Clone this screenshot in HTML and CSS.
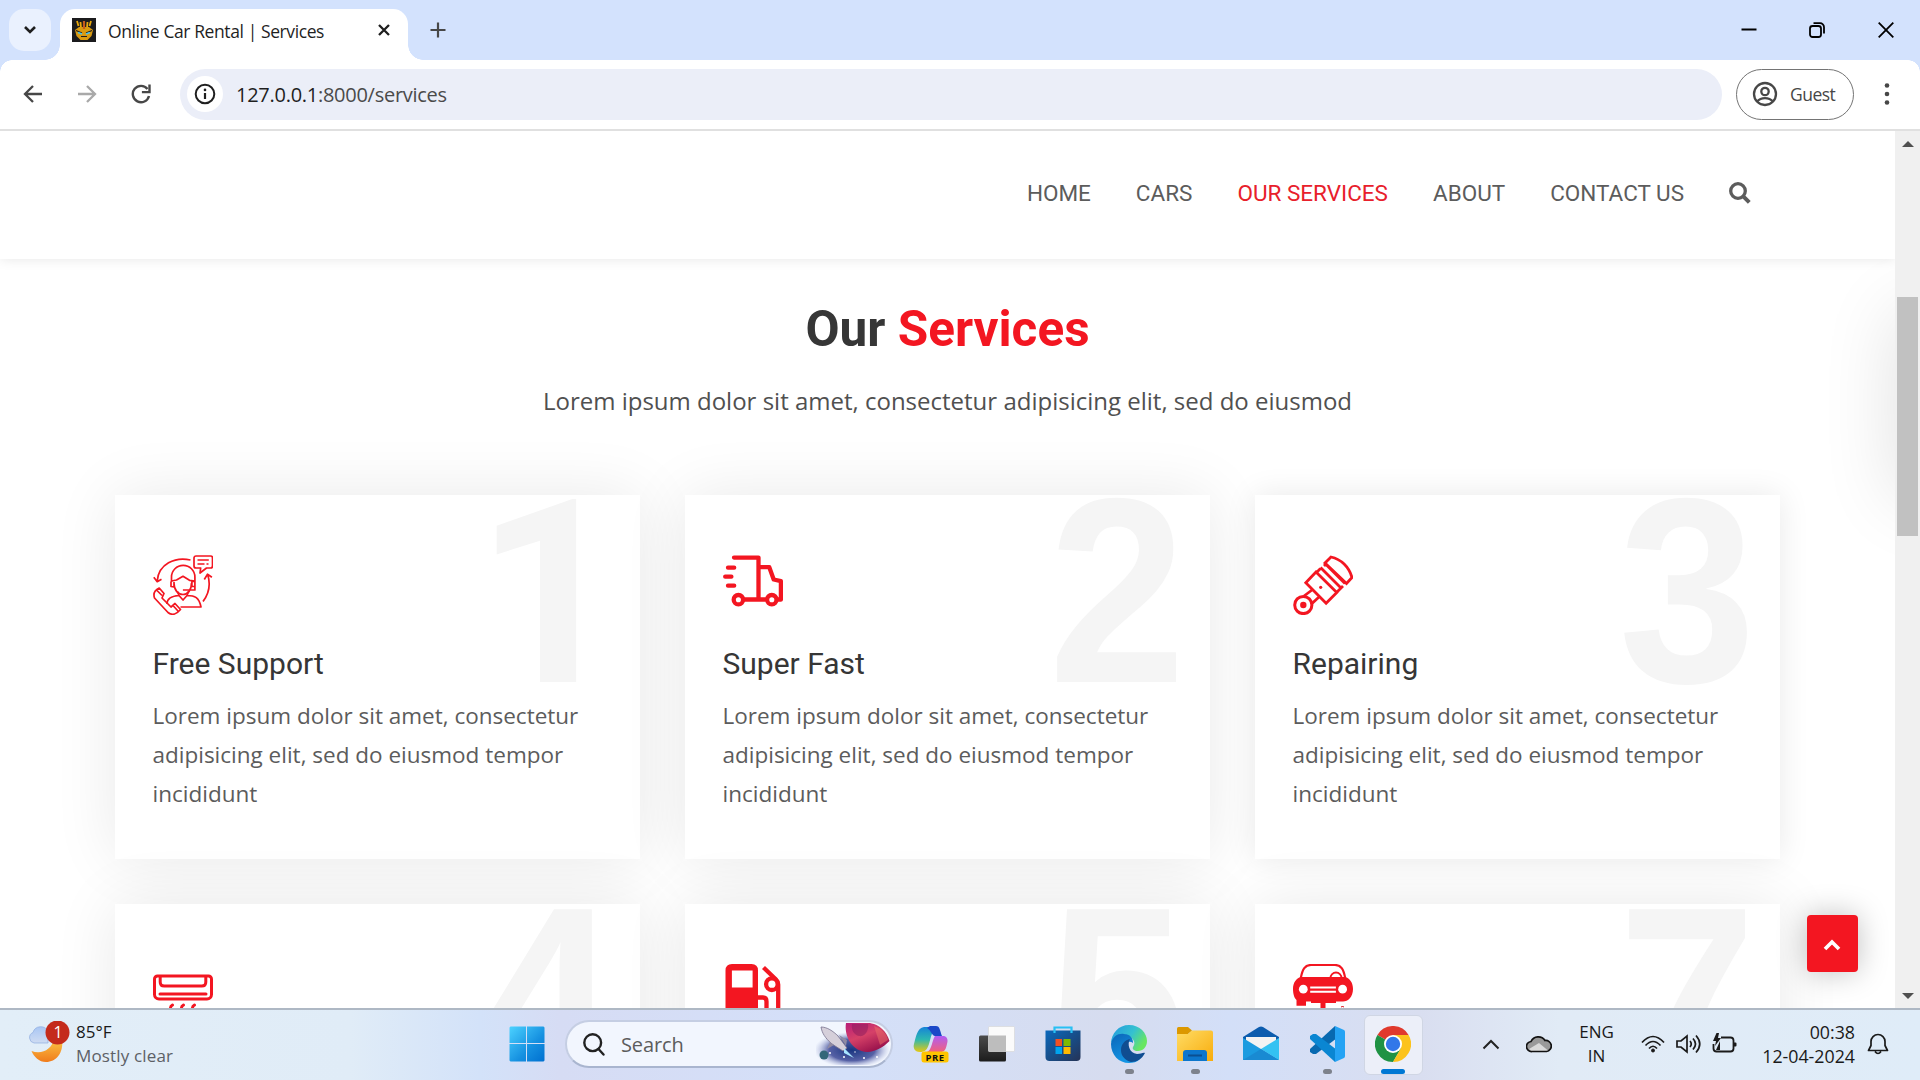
FILE: index.html
```html
<!DOCTYPE html>
<html lang="en">
<head>
<meta charset="utf-8">
<title>Online Car Rental | Services</title>
<link rel="stylesheet" href="styles.css">
</head>
<body>
<div class="window">
  <header class="tabstrip">
    <button class="tab-search"><svg width="14" height="10" viewBox="0 0 14 10"><path d="M2 2l5 5 5-5" fill="none" stroke="#1f1f1f" stroke-width="2.6"/></svg></button>
    <div class="tab">
      <svg class="favicon" width="24" height="24" viewBox="0 0 24 24"><rect width="24" height="24" fill="#1b1b1d"/><path d="M5 3l1.500 5M19 3l-1.500 5M8.500 4l.5 6M15.500 4l-.5 6" stroke="#e9a90c" stroke-width="1.800"/><path d="M3 12l4-3h10l4 3-1.500 6-4 4h-7l-4-4z" fill="#d99a10"/><path d="M12 3v8" stroke="#c65a1c" stroke-width="2.200"/><path d="M4 12.500l6 2.500M20 12.500L14 15M9 18.500h6" stroke="#1b1b1d" stroke-width="1.200"/><path d="M6 14.500l4 1.500M18 14.500l-4 1.500" stroke="#49c1e8" stroke-width="1.600"/></svg>
      <span class="tab-title">Online Car Rental | Services</span>
      <svg class="tab-close" width="14" height="14" viewBox="0 0 14 14"><path d="M2 2l10 10M12 2L2 12" stroke="#1f1f1f" stroke-width="2.3"/></svg>
    </div>
    <svg class="new-tab" width="16" height="16" viewBox="0 0 16 16"><path d="M8 .5v15M.5 8h15" stroke="#474747" stroke-width="2.2"/></svg>
    <div class="window-controls">
      <svg width="16" height="16" viewBox="0 0 16 16"><path d="M.5 7.500h15" stroke="#000" stroke-width="2"/></svg>
      <svg width="16" height="16" viewBox="0 0 16 16"><rect x="1" y="4" width="11" height="11" rx="2.5" fill="none" stroke="#000" stroke-width="1.8"/><path d="M4.500 1.200h6.500a4 4 0 0 1 4 4v6.300" fill="none" stroke="#000" stroke-width="1.8"/></svg>
      <svg width="16" height="16" viewBox="0 0 16 16"><path d="M.7.700l14.600 14.600M15.300.700L.7 15.300" stroke="#000" stroke-width="1.8"/></svg>
    </div>
  </header>
  <div class="toolbar">
    <svg width="20" height="20" viewBox="0 0 20 20"><path d="M19 10H2.500M10 2l-8 8 8 8" fill="none" stroke="#474747" stroke-width="2.300"/></svg>
    <svg width="20" height="20" viewBox="0 0 20 20"><path d="M1 10h16.500M10 2l8 8-8 8" fill="none" stroke="#a9a9a9" stroke-width="2.300"/></svg>
    <svg width="20" height="20" viewBox="0 0 20 20"><path d="M16.500 5A8.200 8.200 0 1 0 18 12" fill="none" stroke="#474747" stroke-width="2.400"/><path d="M18.500.5v7.600h-7.600" fill="none" stroke="#474747" stroke-width="2.400"/></svg>
    <div class="omnibox">
      <span class="site-info"><svg width="22" height="22" viewBox="0 0 22 22"><circle cx="11" cy="11" r="9.300" fill="none" stroke="#1f1f1f" stroke-width="2"/><path d="M11 10v6" stroke="#1f1f1f" stroke-width="2.200"/><circle cx="11" cy="6.900" r="1.300" fill="#1f1f1f"/></svg></span>
      <span class="url">127.0.0.1<span class="url-rest">:8000/services</span></span>
    </div>
    <div class="profile">
      <svg width="26" height="26" viewBox="0 0 26 26" fill="none" stroke="#474747" stroke-width="2.300"><circle cx="13" cy="13" r="11"/><circle cx="13" cy="10.500" r="3.700"/><path d="M5 20.500c4-4.600 12-4.600 16 0"/></svg>
      <span class="guest">Guest</span>
    </div>
    <svg class="menu" width="6" height="24" viewBox="0 0 6 24"><g fill="#474747"><circle cx="3" cy="3.500" r="2.300"/><circle cx="3" cy="12" r="2.300"/><circle cx="3" cy="20.500" r="2.300"/></g></svg>
  </div>

  <div class="viewport">
    <main class="page">
      <nav class="site-nav">
        <a>HOME</a><a>CARS</a><a class="active">OUR SERVICES</a><a>ABOUT</a><a>CONTACT US</a>
        <svg width="22" height="22" viewBox="0 0 22 22" fill="none" stroke="#5c5c5c"><circle cx="9" cy="9" r="7.300" stroke-width="3.300"/><path d="M14.300 14.300l6 6" stroke-width="4"/></svg>
      </nav>
      <section class="services">
        <h1>Our <em>Services</em></h1>
        <p class="lead">Lorem ipsum dolor sit amet, consectetur adipisicing elit, sed do eiusmod</p>
        <div class="cards">
          <article class="card">
            <span class="num one">1</span>
            <svg class="icon" viewBox="0 0 60 60" fill="none" stroke="#f31621" stroke-width="1.700" stroke-linejoin="round">
              <path d="M37.500 5C22 1.500 5.500 9 4.200 26M.8 22.200l3.400 4.500 4.300-2.500M50 46.500c6-8 7.500-18 4.700-27M51.300 24.500l3.200-5.300 4.400 3"/>
              <path d="M43 1h14.500a2 2 0 0 1 2 2v8a2 2 0 0 1-2 2h-4L47 18l.7-5H43a2 2 0 0 1-2-2V3a2 2 0 0 1 2-2zM44.500 5h11.300M44.500 9h7M53.500 9h2"/>
              <path d="M18.500 27v-5a11.700 11.700 0 0 1 23.400 0v13h-12M18.500 26l5-1 6.500-3.700 6.500 4 5.400.7M18 26.500v5l3 .5v-5M41.900 26.500h-3v5h3M21 28c0 7 4 11.500 9 11.500s8.500-4.500 8.500-11.500"/>
              <path d="M14 49c0-6 5-8 12-8.500l4 4.500 4-4.500c8 0 12 2 14 11.500H27.500M24.500 36.500l1.500 4M35.500 36.500L34 40.500"/>
              <path d="M6.200 33C2 35 0 38.500 1.500 43L15 57.500c4 3 8 2.500 12.500-3l-5.500-6-4 3.500-9-9 2-4.500zM4 35.500l5 5M19.500 50l5.500 6"/>
            </svg>
            <h2>Free Support</h2>
            <p>Lorem ipsum dolor sit amet, consectetur<br>adipisicing elit, sed do eiusmod tempor<br>incididunt</p>
          </article>
          <article class="card">
            <span class="num">2</span>
            <svg class="icon" viewBox="0 0 60 60" fill="none" stroke="#f31621" stroke-width="4.300" stroke-linecap="round" stroke-linejoin="round">
              <path d="M11 2.600h24.500v41.500M5 12.700h6.200M2.200 21.700h6.200M5 30.700h6.200M36 12.200h10.300l4.400 12.300 7.200 1.700v18.300h-3M22 44.500h20"/><circle cx="15.400" cy="44.700" r="4.700"/><circle cx="48.800" cy="44.700" r="4.700"/>
            </svg>
            <h2>Super Fast</h2>
            <p>Lorem ipsum dolor sit amet, consectetur<br>adipisicing elit, sed do eiusmod tempor<br>incididunt</p>
          </article>
          <article class="card tight">
            <span class="num">3</span>
            <svg class="icon" viewBox="0 0 60 60" fill="none" stroke="#f31621" stroke-width="2.800">
              <path d="M11 41l8-6M19 48.500l7.500-7M23 17L12.800 27.700l20.300 20.600L43.800 37.500zM23.500 17.500l4-4M27.500 12.500l21 21M33.200 8.800L31 11M33.500 10L52 28.500M38 2l-6 6 21.500 20.500 5.500-6C56 12 48 4 38 2zM44 37l6-6"/><circle cx="10.300" cy="50" r="8.600" stroke-width="3"/><circle cx="10.300" cy="50" r="3.200" fill="#f31621" stroke="none"/><circle cx="27.700" cy="32.300" r="1.600" fill="#f31621" stroke="none"/>
            </svg>
            <h2>Repairing</h2>
            <p>Lorem ipsum dolor sit amet, consectetur<br>adipisicing elit, sed do eiusmod tempor<br>incididunt</p>
          </article>
          <article class="card">
            <span class="num">4</span>
            <svg class="icon" viewBox="0 0 60 60" fill="none" stroke="#f31621" stroke-width="3" stroke-linecap="round"><path d="M4.500 12h51a3 3 0 0 1 3 3v15.500a4.500 4.500 0 0 1-4.500 4.500H6a4.500 4.500 0 0 1-4.500-4.500V15a3 3 0 0 1 3-3zM7.200 12.500V18q0 4 4 4h37.600q4 0 4-4v-5.500M7 30h46M19.500 41q-4 2.500 0 6M30.500 41q-4 2.500 0 6M41.500 41q-4 2.500 0 6"/></svg>
          </article>
          <article class="card">
            <span class="num">5</span>
            <svg class="icon" viewBox="0 0 60 60" fill="none" stroke="#f31621" stroke-width="4.300"><path d="M2.500 60V6.500q0-6.500 6.500-6.500h19.500q6.500 0 6.500 6.500V60zM8.900 6.500v17h20.700v-17z" fill="#f31621" fill-rule="evenodd" stroke="none"/><path d="M40.500 3.500L53 15.500q2.200 2 2.200 5V54M35 33.500h5q3.500 0 3.500 4V54"/><circle cx="48.900" cy="20.200" r="5.800"/></svg>
          </article>
          <article class="card">
            <span class="num">7</span>
            <svg class="icon" viewBox="0 0 60 60"><path d="M7.800 14C9.500 5 12 1 18 1h24c6 0 8.500 4 10.200 13" fill="none" stroke="#f31621" stroke-width="2.200"/><path d="M37.500 14a5.500 5.500 0 0 1 11 0" fill="none" stroke="#f31621" stroke-width="1.800"/><path d="M8 13h44c5 1 8 6 8 12 0 8-5 12.500-10 12.500h-7V39H32.500v21h-5V39H18v-1.500h-5v4.200H3.500V36C1 34 0 29 0 25c0-6 3-11 8-12z" fill="#f31621"/><circle cx="10.300" cy="25.200" r="4.400" fill="#fff"/><circle cx="49.600" cy="25.200" r="4.400" fill="#fff"/><path d="M17.200 23.500h25.700M17.200 27.700h25.700" stroke="#fff" stroke-width="1.900"/><path d="M48 43q1.500-1 3 0" stroke="#f31621"/></svg>
          </article>
        </div>
      </section>
      <aside class="settings-panel"></aside>
      <a class="to-top"><svg width="18" height="12" viewBox="0 0 18 12"><path d="M2 10l7-7 7 7" fill="none" stroke="#fff" stroke-width="3.700"/></svg></a>
    </main>
    <div class="scrollbar">
      <svg width="12" height="6" viewBox="0 0 12 6"><path d="M6 0l6 6H0z" fill="#505050"/></svg>
      <div class="thumb"></div>
      <svg class="down" width="12" height="6" viewBox="0 0 12 6"><path d="M6 6l6-6H0z" fill="#505050"/></svg>
    </div>
  </div>
</div>

<footer class="taskbar">
  <div class="weather">
    <svg width="42" height="42" viewBox="0 0 42 42"><defs><linearGradient id="moon" x2="0" y2="1"><stop offset="0" stop-color="#fbc546"/><stop offset="1" stop-color="#f07c1c"/></linearGradient><linearGradient id="cl" x2="0" y2="1"><stop offset="0" stop-color="#a9c6f4"/><stop offset="1" stop-color="#cfdcf2"/></linearGradient></defs><path d="M34 18C36 32 28 41 18 41 11 41 6 36 3.500 30 14 34 24 28 26 18z" fill="url(#moon)"/><path d="M6 22a5.500 5.500 0 0 1-1-10.500 8 8 0 0 1 15-1v11.500z" fill="url(#cl)" stroke="#8eacdf" stroke-width=".7"/><circle cx="29.500" cy="11.500" r="12" fill="#c42b1c"/><text x="30" y="17" text-anchor="middle" class="badge">1</text></svg>
    <div class="weather-text"><span class="temp">85°F</span><span class="cond">Mostly clear</span></div>
  </div>
  <div class="apps">
    <div class="app"><svg width="36" height="36" viewBox="0 0 36 36"><defs><linearGradient id="win" x2="1" y2="1"><stop offset="0" stop-color="#4cd2ff"/><stop offset=".6" stop-color="#1590e0"/><stop offset="1" stop-color="#0070d0"/></linearGradient></defs><path d="M1.500.5h15.500V17H.5V1.500zM18 .5h16.500l1 1V17H18zM.5 18H17v17.500H1.500l-1-1zM18 18h17.500v16.500l-1 1H18z" fill="url(#win)"/></svg></div>
    <div class="search">
      <svg width="22" height="23" viewBox="0 0 22 23" fill="none" stroke="#222" stroke-width="2.400" stroke-linecap="round"><circle cx="9.700" cy="9.700" r="8.400"/><path d="M15.500 16l5 5.500"/></svg>
      <span class="search-label">Search</span>
      <svg class="art" width="75" height="42" viewBox="0 0 75 42"><defs><radialGradient id="sky"><stop offset="0" stop-color="#17347f"/><stop offset=".6" stop-color="#44509b" stop-opacity=".9"/><stop offset="1" stop-color="#a9b3dc" stop-opacity="0"/></radialGradient><linearGradient id="planet" x2=".6" y2="1"><stop offset="0" stop-color="#b71d78"/><stop offset=".5" stop-color="#d64168"/><stop offset="1" stop-color="#99124c"/></linearGradient></defs><ellipse cx="36" cy="27" rx="38" ry="18" fill="url(#sky)"/><path d="M30 0h24c9 1 17 9 19.500 18-8 8-18 13-28 10C35 25 28 12 30 0z" fill="url(#planet)"/><path d="M36 1h16c1 8-4 13-9 12s-8-6-7-12z" fill="#8a1c5c" opacity=".5"/><path d="M58 3c8 3 13 8 14 14l-8 5z" fill="#ee7069" opacity=".5"/><path d="M5 4c6 0 12 4 17 9l9 12-4 3-11-7C9 15 6 10 5 4z" fill="#d5cfda" stroke="#77718d" stroke-width=".8"/><path d="M14 19l-3 7 7-4M23 12l8 5-1 6" fill="#8f8aa3"/><path d="M28 25l10 10-10-5z" fill="#a9e6ff"/><circle cx="8" cy="32" r="4.500" fill="#346779"/><g fill="#fff"><circle cx="28" cy="34" r="1"/><circle cx="14" cy="30" r="1"/><circle cx="48" cy="35" r="1"/><circle cx="61" cy="34" r="1"/><circle cx="39" cy="29" r=".7"/></g></svg>
    </div>
    <div class="app"><svg width="36" height="38" viewBox="0 0 36 38"><defs><linearGradient id="c1" x2="0" y2="1"><stop offset="0" stop-color="#1683d8"/><stop offset=".5" stop-color="#2db8b0"/><stop offset="1" stop-color="#e8c80f"/></linearGradient><linearGradient id="c2" x2="0" y2="1"><stop offset="0" stop-color="#b05cf4"/><stop offset="1" stop-color="#f2617a"/></linearGradient></defs><path d="M11 2h12c-4 4-5 10-7 17-2 6-4 8-9 8C1 27 0 22 1 19 3 12 4 3 11 2z" fill="url(#c1)"/><path d="M17 1h6c4 0 4 5 6 10h-7c-3 0-4-6-8-8z" fill="#1b48c8"/><path d="M22 11h9c4 1 4 5 3 8-2 8-3 8-9 8H14c5-2 5-12 8-16z" fill="url(#c2)"/><rect x="8.500" y="26.500" width="27" height="11" rx="2.500" fill="#ffc400"/><text x="22" y="35.600" text-anchor="middle" class="pre">PRE</text></svg></div>
    <div class="app"><svg width="36" height="36" viewBox="0 0 36 36"><defs><linearGradient id="tv" x2="0" y2="1"><stop offset="0" stop-color="#4b4b4b"/><stop offset="1" stop-color="#1c1c1c"/></linearGradient></defs><rect y="9.500" width="27" height="26" rx="1.500" fill="url(#tv)"/><rect x="9.500" y=".5" width="26" height="25" rx="1" fill="#fbfbfb" stroke="#d8d8d8" stroke-width=".7"/><path d="M9.500 9.500H27v16H9.500z" fill="#bdbdbd"/></svg></div>
    <div class="app"><svg width="36" height="36" viewBox="0 0 36 36"><defs><linearGradient id="st" x2="1" y2="1"><stop offset="0" stop-color="#0a69bd"/><stop offset="1" stop-color="#253356"/></linearGradient></defs><path d="M.5 4.500h35V31q0 4-4 4h-27q-4 0-4-4z" fill="url(#st)"/><path d="M9.500 7V1.500h17V7" fill="none" stroke="#27c0f4" stroke-width="2.200"/><path d="M10.500 13H17v7h-6.500z" fill="#f25022"/><path d="M18.500 13h7v7h-7z" fill="#7fba00"/><path d="M10.500 21H17v7h-6.500z" fill="#00a4ef"/><path d="M18.500 21h7v7h-7z" fill="#ffb900"/></svg></div>
    <div class="app open"><svg width="36" height="38" viewBox="0 0 36 38"><defs><linearGradient id="e1" x2="1" y2=".5"><stop offset="0" stop-color="#2298e0"/><stop offset=".6" stop-color="#35c1d0"/><stop offset="1" stop-color="#68e661"/></linearGradient><linearGradient id="e2" x2=".5" y2="1"><stop offset="0" stop-color="#0b65b8"/><stop offset="1" stop-color="#1497e6"/></linearGradient></defs><path d="M0 19C0 8 8 0 18 0c11 0 18 8 18 16 0 6-4 10-9 10-4 0-6-2-5-4 3-4 1-8-4-11C11 7 2 11 0 19z" fill="url(#e1)"/><path d="M0 19C1 11 8 8 13 9c6 0 9 4 9 9-4-3-8 0-8 5 0 7 7 12 15 11-3 3-7 4-11 4C8 38 0 30 0 19z" fill="url(#e2)"/><path d="M10 25c0-6 4-10 9-11-3 5-1 14 7 15 4 0 6-2 8-1-3 6-8 9-14 9-6-2-10-6-10-12z" fill="#104d91"/></svg></div>
    <div class="app open"><svg width="36" height="36" viewBox="0 0 36 36"><defs><linearGradient id="fo" x2="1" y2="1"><stop offset="0" stop-color="#ffdc65"/><stop offset="1" stop-color="#f8ac0c"/></linearGradient></defs><path d="M0 8V2.500Q0 1 1.500 1H11l4 3.500L11 8z" fill="#dc9800"/><path d="M0 8h11l4-3.500h19q2 0 2 2V35H0z" fill="url(#fo)"/><path d="M6 35V27q0-3 3-3h18q3 0 3 3v8z" fill="#0c76cc"/><path d="M11 29.500h14" stroke="#0b4f91" stroke-width="2"/></svg></div>
    <div class="app"><svg width="36" height="36" viewBox="0 0 36 36"><path d="M0 11L16 1q2-1 4 0l16 10v5H0z" fill="#0c5cae"/><path d="M3 11h30v8L18 27 3 20z" fill="#f3f3f3"/><path d="M0 12l36 22H0z" fill="#1b9be0"/><path d="M36 12v22L18 23z" fill="#34c2f2"/><path d="M0 34L18 23l18 11z" fill="#198ad2"/></svg></div>
    <div class="app open"><svg width="36" height="36" viewBox="0 0 36 36"><path d="M26 0L1 23v3l3 2h3L28 12z" fill="#0869b0"/><path d="M26 36L1 13v-3l3-2h3l21 16z" fill="#0a86d2"/><path d="M26 0l9 4q1 .5 1 2v24q0 1.500-1 2l-9 4V0z" fill="#25a3f4"/></svg></div>
    <div class="app current"><svg width="36" height="36" viewBox="0 0 36 36"><path d="M18 18L2.400 9A18 18 0 0 1 33.600 9z" fill="#e0392d"/><path d="M18 18L2.400 9A18 18 0 0 0 18 36l8-13.500z" fill="#1f9244"/><path d="M18 18l7.800 4.500L18 36A18 18 0 0 0 33.600 9H18z" fill="#fcc31c"/><circle cx="18" cy="18" r="9" fill="#fff"/><circle cx="18" cy="18" r="7.200" fill="#3277e9"/></svg></div>
  </div>
  <div class="tray">
    <svg class="t-chev" width="18" height="11" viewBox="0 0 18 11"><path d="M1.500 9.500L9 2l7.500 7.500" fill="none" stroke="#222" stroke-width="2"/></svg>
    <svg class="t-cloud" width="26" height="18" viewBox="0 0 26 18"><path d="M6 16.500a5 5 0 0 1-1-10A8 8 0 0 1 19 5.500a5.500 5.500 0 0 1 1.500 11z" fill="#999" stroke="#111" stroke-width="1.700"/><path d="M3 14l10-6 9 7.500H5z" fill="#d9d9d9"/></svg>
    <div class="lang"><span>ENG</span><span>IN</span></div>
    <svg class="t-wifi" width="24" height="18" viewBox="0 0 24 18" fill="none" stroke="#1a1a1a" stroke-width="1.700"><path d="M1 7.500Q12-4.500 23 7.500M4.500 10.500q7.500-8 15 0M8 13.500q4-4.500 8 0"/><circle cx="12" cy="15.500" r="1.500" fill="#1a1a1a" stroke-width="1"/></svg>
    <svg class="t-vol" width="26" height="20" viewBox="0 0 26 20" fill="none" stroke="#1a1a1a" stroke-width="1.700"><path d="M1 7v6h4l6 5V2L5 7zM14 7q2.500 3 0 6M17 4.500q5 5.500 0 11M20 1.500q7.500 8.500 0 17"/></svg>
    <svg class="t-bat" width="26" height="22" viewBox="0 0 26 22"><path d="M9 4.500h9.500q3 0 3 3v8q0 3-3 3h-14q-3 0-3-3V11" fill="none" stroke="#1a1a1a" stroke-width="1.800"/><path d="M22 9.500h1.500q1 0 1 1v2q0 1-1 1H22zM4.500 0L1 8h3L3 13l6-8H6l1-5zM4 17l4-9v9z" fill="#1a1a1a"/></svg>
    <div class="clock"><span class="time">00:38</span><span class="date">12-04-2024</span></div>
    <svg class="t-bell" width="22" height="22" viewBox="0 0 22 22" fill="none" stroke="#1a1a1a" stroke-width="1.700" stroke-linejoin="round"><path d="M4 12.500V8.500a7 7 0 0 1 14 0v4l2.500 5h-19zM8 18.500q3 4 6 0"/></svg>
  </div>
</footer>
</body>
</html>
```
FILE: styles.css
```css
* { box-sizing: border-box; }
body { margin: 0; width: 1920px; height: 1080px; overflow: hidden; display: flex; flex-direction: column; font-family: "Open Sans", sans-serif; background: #fff; }
svg { display: block; flex: none; }
button { border: 0; padding: 0; }
.window { height: 1008px; display: flex; flex-direction: column; }

/* Browser frame */
.tabstrip { height: 60px; flex: none; background: #d3e2fd; display: flex; align-items: center; padding-left: 9px; position: relative; }
.tab-search { width: 42px; height: 42px; border-radius: 15px; background: #eaf1fe; display: flex; align-items: center; justify-content: center; }
.tab { margin-left: 9px; align-self: flex-end; width: 348px; height: 51px; background: #fff; border-radius: 15px 15px 0 0; display: flex; align-items: center; padding: 0 17px 9px 12px; position: relative; }
.tab::before, .tab::after { content: ""; position: absolute; bottom: 0; width: 15px; height: 15px; }
.tab::before { left: -15px; background: radial-gradient(circle at 0 0, transparent 14.5px, #fff 15px); }
.tab::after { right: -15px; background: radial-gradient(circle at 100% 0, transparent 14.5px, #fff 15px); }
.tab-title { margin-left: 12px; padding-top: 2px; font-size: 17.5px; letter-spacing: -.41px; color: #1f1f1f; flex: 1; white-space: nowrap; }
.new-tab { margin-left: 22px; }
.window-controls { margin-left: auto; display: flex; gap: 52.5px; padding-right: 26.5px; }
.toolbar { height: 71px; flex: none; display: flex; align-items: center; padding: 0 28px 1px 23px; background: radial-gradient(circle at 12px 12px, #fff 11.5px, #d3e2fd 12px) 0 0 / 12px 12px no-repeat, radial-gradient(circle at 0 12px, #fff 11.5px, #d3e2fd 12px) 100% 0 / 12px 12px no-repeat, #fff; border-bottom: 2px solid #e0e0e0; }
.toolbar > svg { margin-right: 34px; }
.omnibox { margin-left: -5px; width: 1542px; height: 51px; border-radius: 26px; background: #ebeef8; display: flex; align-items: center; padding-left: 7px; }
.site-info { width: 36px; height: 36px; border-radius: 50%; background: #fff; display: grid; place-items: center; }
.url { margin-left: 13px; font-size: 20px; letter-spacing: -.27px; color: #1f1f1f; white-space: nowrap; }
.url-rest { color: #4a4a4a; }
.profile { margin-left: 14px; width: 118px; height: 51px; border: 1.5px solid #747474; border-radius: 26px; display: flex; align-items: center; padding-left: 15px; gap: 12px; }
.guest { font-size: 17.5px; letter-spacing: -.5px; color: #474747; }
.toolbar > .menu { margin: 0 0 0 30px; }

/* Page */
.viewport { flex: 1; min-height: 0; display: flex; overflow: hidden; }
.page { width: 1895px; position: relative; overflow: hidden; }
.site-nav { height: 128px; position: relative; z-index: 2; background: #fff; box-shadow: 0 0 12px rgba(0, 0, 0, .1); display: flex; align-items: center; justify-content: flex-end; gap: 45px; padding: 0 144px 4px 0; font: 22.5px Roboto, sans-serif; color: #5c5c5c; }
.site-nav .active { color: #e8202b; }
.services { padding: 36px 115px 0; color: #5c5c5c; }
h1 { margin: 0; text-align: center; font: 700 49.5px/68px Roboto, sans-serif; color: #363636; }
h1 em { font-style: normal; color: #f31621; }
.lead { margin: 20px 0 0; text-align: center; font-size: 24px; line-height: 36px; color: #505050; }
.cards { margin-top: 76px; display: grid; grid-template-columns: repeat(3, 525px); grid-auto-rows: 364px; gap: 45px; }
.card { background: #fff; padding: 60px 37.5px 0; position: relative; box-shadow: 0 0 60px rgba(0, 0, 0, .09); }
.card.tight { box-shadow: 0 0 30px rgba(0, 0, 0, .09); }
.card .icon { width: 60px; height: 60px; position: relative; }
.num { position: absolute; right: 24px; top: -36px; font: 700 264px/264px "Liberation Sans", sans-serif; color: #f5f5f5; transform: scaleX(.935); transform-origin: 100% 50%; }
.num.one { right: 17px; top: -32px; font: 700 257px/264px Roboto, sans-serif; transform: none; }
h2 { margin: 29px 0 0; font: 400 30px/40px Roboto, sans-serif; color: #363636; position: relative; white-space: nowrap; }
.card p { margin: 12px 0 0; font-size: 22.5px; line-height: 39px; position: relative; white-space: nowrap; }
.settings-panel { position: absolute; left: 1895px; top: 180px; width: 300px; height: 188px; box-shadow: 0 0 75px rgba(0, 0, 0, .12); }
.to-top { position: absolute; left: 1807px; top: 784px; width: 51px; height: 57px; border-radius: 4px; background: #f31621; box-shadow: 0 0 30px rgba(0, 0, 0, .25); display: grid; place-items: center; padding: 2px 1px 0 0; }
.scrollbar { width: 25px; background: #f0f0f0; display: flex; flex-direction: column; align-items: center; padding: 10px 0 9px; }
.thumb { width: 21px; height: 239px; flex: none; margin-top: 150px; background: #c1c1c1; }
.down { margin-top: auto; }

/* Taskbar */
.taskbar { height: 72px; border-top: 2px solid #aeb8c4; background: linear-gradient(90deg, #e2eef8 0, #e0ecf7 350px, #d3e2f9 480px, #d6dcf4 560px, #d4e0f9 850px, #d6dcef 1110px, #d3dff8 1230px, #d9def0 1420px, #e1ebf6 1560px, #dfecf8 1920px); display: flex; align-items: center; color: #1a1a1a; padding-bottom: 2px; }
.weather { width: 466px; margin-left: 28px; display: flex; gap: 6px; align-items: center; font-size: 17px; }
.weather svg { margin-top: -5px; }
.badge { font: 16px "Open Sans", sans-serif; fill: #fff; }
.weather-text, .lang, .clock { display: flex; flex-direction: column; line-height: 24px; white-space: nowrap; }
.cond { color: #5c6066; letter-spacing: .15px; }
.apps { display: flex; align-items: center; }
.app { width: 66px; height: 68px; display: grid; place-items: center; position: relative; }
.app.open::after, .app.current::after { content: ""; position: absolute; left: 29px; bottom: 4px; width: 9px; height: 5px; border-radius: 3px; background: #7d828c; }
.app.current::before { content: ""; position: absolute; left: 4px; top: 5px; width: 57px; height: 58px; border-radius: 6px; background: #eceff9; border: 1px solid #d0d6e4; }
.app.current::after { left: 21px; width: 24px; background: #0078d4; }
.app svg { position: relative; }
.search { margin: 0 5px; width: 328px; height: 48px; border-radius: 24px; background: #f2f6fe; border: 2px solid #c5cee3; border-bottom-color: #a9b5cf; display: flex; align-items: center; padding-left: 16px; }
.search-label { margin-left: 16px; font-size: 20px; letter-spacing: -.1px; color: #5c5c5c; }
.art { margin-left: auto; border-radius: 0 21px 21px 0; }
.pre { font: 700 9.5px "Open Sans", sans-serif; fill: #111; letter-spacing: .5px; }
.tray { flex: 1; display: flex; align-items: center; padding-left: 56px; font-size: 17px; }
.t-cloud { margin-left: 26px; }
.lang { margin-left: 27px; width: 35px; align-items: center; }
.t-wifi { margin-left: 27px; }
.t-vol { margin-left: 11px; }
.t-bat { margin-left: 10px; }
.clock { margin-left: 21px; width: 96px; align-items: flex-end; font-size: 17.8px; }
.t-bell { margin-left: 12px; }
```
